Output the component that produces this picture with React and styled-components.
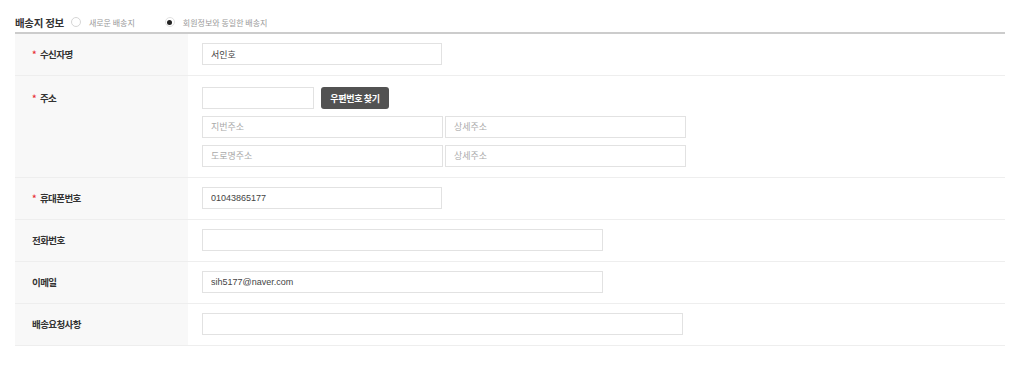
import styled, { createGlobalStyle } from "styled-components";

const GlobalStyle = createGlobalStyle`
  body {
    margin: 0;
    background: #fff;
    font-family: "Noto Sans CJK KR", "Liberation Sans", sans-serif;
    color: #333;
  }
`;

const Wrap = styled.div`
  width: 990px;
  padding: 12px 0 0 15px;
`;

const Header = styled.div`
  display: flex;
  align-items: center;
  height: 20px;
  border-bottom: 2px solid #cccccc;
`;

const Title = styled.h3`
  margin: 0 7px 0 0;
  font-size: 10.5px;
  font-weight: 700;
  color: #333;
  letter-spacing: -0.3px;
`;

const RadioLabel = styled.label`
  display: flex;
  align-items: center;
  gap: 8px;
  margin-right: 30px;
  font-size: 8px;
  color: #999;
`;

const Dot = styled.span`
  width: 10px;
  height: 10px;
  box-sizing: border-box;
  border-radius: 50%;
  border: 1px solid ${({ checked }) => (checked ? "#e2e2e2" : "#d6d6d6")};
  background: #fff;
  display: flex;
  align-items: center;
  justify-content: center;
  &::after {
    content: "";
    width: 5px;
    height: 5px;
    border-radius: 50%;
    background: ${({ checked }) => (checked ? "#222" : "transparent")};
  }
`;

const Row = styled.div`
  display: flex;
  border-bottom: 1px solid #eeeeee;
`;

const Label = styled.div`
  width: 173px;
  flex-shrink: 0;
  box-sizing: border-box;
  background: #f8f8f8;
  padding: ${({ tall }) => (tall ? "11px" : "9px")} 0 0 17px;
  font-size: 9.5px;
  font-weight: 700;
  line-height: 22px;
  color: #333;
  letter-spacing: -0.6px;
`;

const Star = styled.span`
  color: #e8303a;
  font-size: 9px;
  margin-right: 4px;
`;

const Cell = styled.div`
  flex: 1;
  display: flex;
  flex-direction: column;
  gap: 7px;
  padding: ${({ tall }) => (tall ? "11px" : "9px")} 14px 10px;
`;

const Line = styled.div`
  display: flex;
  gap: ${({ gap }) => gap || 0}px;
`;

const Input = styled.input`
  width: ${({ w }) => w}px;
  height: 22px;
  box-sizing: border-box;
  border: 1px solid #e2e2e2;
  border-radius: 0;
  padding: 0 8px;
  font-family: "Liberation Sans", "Noto Sans CJK KR", sans-serif;
  font-size: 9px;
  color: #444;
  outline: none;
  &::placeholder {
    font-family: "Noto Sans CJK KR", sans-serif;
    color: #aaa;
    font-size: 9px;
  }
`;

const Button = styled.button`
  height: 22px;
  width: 68px;
  border: none;
  border-radius: 3px;
  background: #525252;
  color: #fff;
  font-family: "Noto Sans CJK KR", sans-serif;
  font-weight: 700;
  font-size: 9px;
  letter-spacing: -0.3px;
  padding: 0;
`;

const Field = ({ label, required, tall, children }) => (
  <Row>
    <Label tall={tall}>
      {required && <Star>*</Star>}
      {label}
    </Label>
    <Cell tall={tall}>{children}</Cell>
  </Row>
);

const App = () => (
  <>
    <GlobalStyle />
    <Wrap>
      <Header>
        <Title>배송지 정보</Title>
        <RadioLabel>
          <Dot />
          새로운 배송지
        </RadioLabel>
        <RadioLabel>
          <Dot checked />
          회원정보와 동일한 배송지
        </RadioLabel>
      </Header>

      <Field label="수신자명" required>
        <Input w={240} defaultValue="서인호" />
      </Field>

      <Field label="주소" required tall>
        <Line gap={7}>
          <Input w={112} />
          <Button>우편번호 찾기</Button>
        </Line>
        <Line gap={2}>
          <Input w={241} placeholder="지번주소" />
          <Input w={241} placeholder="상세주소" />
        </Line>
        <Line gap={2}>
          <Input w={241} placeholder="도로명주소" />
          <Input w={241} placeholder="상세주소" />
        </Line>
      </Field>

      <Field label="휴대폰번호" required>
        <Input w={240} defaultValue="01043865177" />
      </Field>

      <Field label="전화번호">
        <Input w={401} />
      </Field>

      <Field label="이메일">
        <Input w={401} defaultValue="sih5177@naver.com" />
      </Field>

      <Field label="배송요청사항">
        <Input w={481} />
      </Field>
    </Wrap>
  </>
);

export default App;
